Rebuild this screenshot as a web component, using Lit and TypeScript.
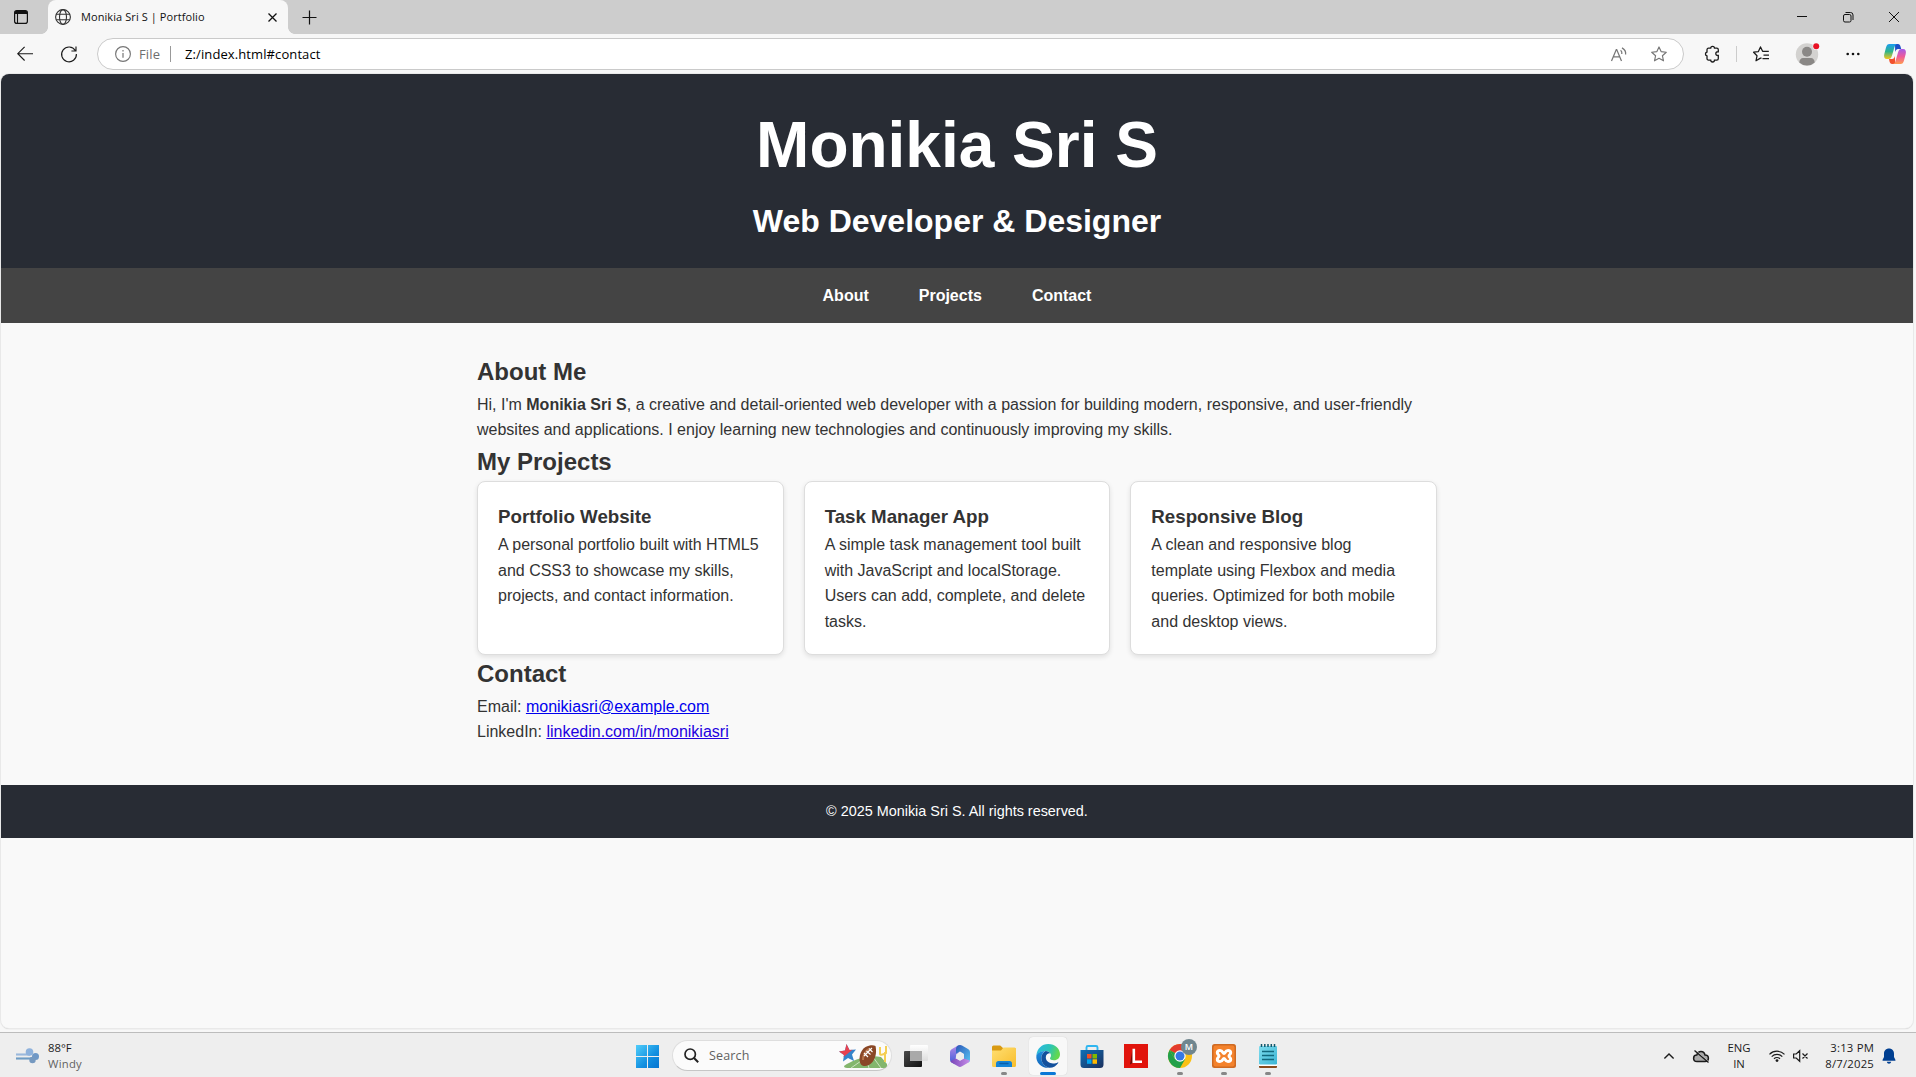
import { LitElement, html, css, svg } from "lit";
import { customElement } from "lit/decorators.js";

const uiFont = css`"Segoe UI", "Open Sans", "Noto Sans", sans-serif`;

@customElement("browser-tabs")
class BrowserTabs extends LitElement {
  static styles = css`
    :host { display: flex; align-items: center; height: 34px; background: #cdcdcd; font: 11px/34px ${uiFont}; color: #111; }
    svg { display: block; fill: none; stroke: #111; overflow: visible; flex: none; }
    .workspaces { width: 42px; height: 34px; display: flex; align-items: center; justify-content: center; margin-right: 6px; }
    .tab { position: relative; width: 240px; height: 34px; box-sizing: border-box; background: #f7f7f7; border-radius: 8px 8px 0 0; display: flex; align-items: center; padding: 0 11px 0 7px; }
    .tab::before, .tab::after { content: ""; position: absolute; bottom: 0; width: 7px; height: 7px; }
    .tab::before { left: -7px; background: radial-gradient(circle at 0 0, #cdcdcd 6.6px, #f7f7f7 7.2px); }
    .tab::after { right: -7px; background: radial-gradient(circle at 100% 0, #cdcdcd 6.6px, #f7f7f7 7.2px); }
    .title { margin-left: 10px; flex: 1; white-space: nowrap; letter-spacing: 0.08px; }
    .add { margin-left: 14px; }
    .controls { margin-left: auto; display: flex; }
    .control { width: 46px; display: flex; align-items: center; justify-content: center; }
    .controls .control:last-child { margin-right: -1px; }
  `;
  render() {
    return html`
      <div class="workspaces">
        <svg width="14" height="14" viewBox="0 0 14 14"><rect x=".6" y=".6" width="12.8" height="12.8" rx="2.2" stroke-width="1.2"/><path d="M1 2.5C1 1 2 .8 3 .8h8c1.500 0 2 .6 2 1.700V4H1z" fill="#111" stroke="none"/><path d="M3.500 3.500V13" stroke-width="1.100"/></svg>
      </div>
      <div class="tab">
        <svg width="16" height="16" viewBox="0 0 16 16"><g stroke="#333" stroke-width="1.100"><circle cx="8" cy="8" r="7.400"/><ellipse cx="8" cy="8" rx="3.500" ry="7.400"/><path d="M1.200 5.300h13.600M1.200 10.700h13.600"/></g></svg>
        <span class="title">Monikia Sri S | Portfolio</span>
        <svg width="9" height="9" viewBox="0 0 9 9"><path d="M.5.5l8 8M8.500.5l-8 8" stroke-width="1.250"/></svg>
      </div>
      <svg class="add" width="15" height="15" viewBox="0 0 15 15"><path d="M.5 7.500h14M7.500.5v14" stroke-width="1.200"/></svg>
      <div class="controls">
        <div class="control"><svg width="10" height="10" viewBox="0 0 10 10"><path d="M0 4.500h10"/></svg></div>
        <div class="control"><svg width="10" height="10" viewBox="0 0 10 10"><rect x=".5" y="2.500" width="7.500" height="7.500" rx="1.500"/><path d="M2.500.5h5A2.500 2.500 0 0 1 10 3v5"/></svg></div>
        <div class="control"><svg width="10" height="10" viewBox="0 0 10 10"><path d="M0 0l10 10M10 0L0 10"/></svg></div>
      </div>`;
  }
}

const star = svg`<path d="M8 .9l2.100 4.700 5.200.6-3.900 3.500 1.100 5.100L8 12.300l-4.500 2.500 1.100-5.100L.7 6.200l5.200-.6z" stroke-linejoin="round"/>`;

@customElement("browser-toolbar")
class BrowserToolbar extends LitElement {
  static styles = css`
    :host { display: flex; align-items: center; height: 40px; box-sizing: border-box; background: #f7f7f7; padding: 0 10px 0 17px; font: 13px/20px ${uiFont}; }
    svg { display: block; fill: none; stroke: #1b1b1b; stroke-width: 1.15; overflow: visible; flex: none; }
    .reload { margin-left: 28px; }
    .address { margin-left: 20px; width: 1587px; height: 32px; box-sizing: border-box; border: 1px solid #cacaca; border-radius: 16px; background: #fff; display: flex; align-items: center; padding: 0 16px 0 17px; }
    .grey { stroke: #767676; }
    .scheme { margin-left: 8px; color: #6e6e6e; width: 31px; font-size: 13px; letter-spacing: 0.15px; }
    .rule { width: 1px; height: 16px; background: #999; }
    .url { margin-left: 14px; flex: 1; color: #000; letter-spacing: 0.1px; }
    .read { margin-right: 24px; }
    .ext { margin-left: 21px; }
    .faint { background: #ccc; margin: 0 16px; }
    .avatar { margin-left: 27px; }
    .more { margin-left: 28px; fill: #111; stroke: none; }
    .copilot { margin-left: 24px; stroke: none; }
  `;
  render() {
    return html`
      <svg width="16" height="16" viewBox="0 0 16 16"><path d="M16 7.700H.8M7.600.9L.8 7.700l6.800 6.800"/></svg>
      <svg class="reload" width="16" height="16" viewBox="0 0 16 16"><path d="M14.300 4.500A7.400 7.400 0 1 0 15.400 8M15 .4v4.600h-4.600"/></svg>
      <div class="address">
        <svg class="grey" width="16" height="16" viewBox="0 0 16 16"><circle cx="8" cy="8" r="7.400"/><path d="M8 7v4.800M8 4v1.400" stroke-width="1.200"/></svg>
        <span class="scheme">File</span><span class="rule"></span>
        <span class="url">Z:/index.html#contact</span>
        <svg class="read grey" width="16" height="15" viewBox="0 0 16 15"><path d="M.5 14L5.300 2.500h.4L10.500 14M2.300 9.800h6.400M9.600 3.200c1.100.9 1.500 2.300 1.200 3.800M11 .9c2.800 1.600 4 3.900 3.600 6.600" stroke-width="1.250"/></svg>
        <svg class="grey" width="16" height="16" viewBox="0 0 16 16">${star}</svg>
      </div>
      <svg class="ext" width="15" height="16" viewBox="0 0 15 16"><path d="M3.500 2.200h2.200a1.900 1.900 0 0 1 3.800 0h2.300c1 0 1.500.6 1.500 1.500v2.100c-3-.7-3.700 3.900 0 3.700v3c0 1-.6 1.600-1.500 1.600H9.500a1.900 1.900 0 0 1-3.800 0H3.500c-.9 0-1.500-.6-1.500-1.600v-2.600a2 2 0 0 1 0-3.900V3.700c0-.9.6-1.500 1.500-1.500z" stroke-width="1.300"/></svg>
      <span class="rule faint"></span>
      <svg width="16" height="16" viewBox="0 0 16 16"><path d="M8.500 11.800L7 12.400l-4 2.400 1-5L.6 6.200l4.800-.6L7.500.9l2.100 4.400h6.200M10.500 9h5.500M9.500 12.500H16" stroke-linejoin="round" stroke-width="1.250"/></svg>
      <svg class="avatar" width="22" height="23" viewBox="0 0 22 23"><g stroke="none"><circle cx="11" cy="11.500" r="11.200" fill="#d3d2d0"/><circle cx="11" cy="8.800" r="5" fill="#8a8886"/><path d="M3.300 19.500C3.500 16.500 5 15 7 15h8c2 0 3.500 1.500 3.700 4.500a11.200 11.200 0 0 1-15.400 0z" fill="#8a8886"/><circle cx="20.200" cy="3.300" r="3.600" fill="#f7f7f7"/><circle cx="20.200" cy="3.300" r="3" fill="#e81123"/></g></svg>
      <svg class="more" width="14" height="4" viewBox="0 0 14 4"><circle cx="1.700" cy="2" r="1.300"/><circle cx="7" cy="2" r="1.300"/><circle cx="12.300" cy="2" r="1.300"/></svg>
      <svg class="copilot" width="22" height="20" viewBox="0 0 22 20">
        <defs>
          <linearGradient id="a" x1="0" y1="0" x2="0" y2="1"><stop offset="0" stop-color="#1b9df0"/><stop offset=".5" stop-color="#2fb48a"/><stop offset="1" stop-color="#f6c61a"/></linearGradient>
          <linearGradient id="b" x1="0" y1="0" x2="0" y2="1"><stop offset="0" stop-color="#a45be8"/><stop offset=".5" stop-color="#ee5a9a"/><stop offset="1" stop-color="#ff9a50"/></linearGradient>
        </defs>
        <path d="M11 0h3c1.500 0 2 1 2.500 2.500l.7 2.500h-3c-2 0-2.500 1.500-3 3z" fill="#1c50c8"/>
        <path d="M11 20H8c-1.500 0-2-1-2.500-2.500L5 15h3c2 0 2.500-1.500 3-3z" fill="#f2502e"/>
        <path d="M5.500 0H13c-1.500.3-2 1.500-2.500 3L8 11.500C7.300 14 6.500 15 4.500 15H3c-2.500 0-3.500-2-2.700-5L2 3.500C2.700 1 3.500 0 5.500 0z" fill="url(#a)"/>
        <path d="M16.500 20H9c1.500-.3 2-1.500 2.500-3L14 8.500c.7-2.500 1.500-3.500 3.500-3.500H19c2.500 0 3.500 2 2.700 5L20 16.500c-.7 2.500-1.500 3.500-3.500 3.500z" fill="url(#b)"/>
      </svg>`;
  }
}

const projects = [
  { name: "Portfolio Website", text: "A personal portfolio built with HTML5 and CSS3 to showcase my skills, projects, and contact information." },
  { name: "Task Manager App", text: "A simple task management tool built with JavaScript and localStorage. Users can add, complete, and delete tasks." },
  { name: "Responsive Blog", text: "A clean and responsive blog template using Flexbox and media queries. Optimized for both mobile and desktop views." },
];

@customElement("portfolio-page")
class PortfolioPage extends LitElement {
  static styles = css`
    :host { display: block; background: #f9f9f9; color: #333; font: 16px/1.6 Arial, "Liberation Sans", sans-serif; }
    * { margin: 0; padding: 0; box-sizing: border-box; }
    header { background: #282c34; color: #fff; padding: 20px; text-align: center; }
    h1 { font-size: 64px; }
    header h2 { font-size: 32px; }
    nav { background: #444; padding: 15px; display: flex; justify-content: center; gap: 50px; }
    nav a { color: #fff; font-weight: bold; text-decoration: none; }
    main { max-width: 1000px; margin: 0 auto; padding: 30px 20px 40px; }
    h3 { font-size: 1.17em; }
    .cards { display: grid; grid-template-columns: repeat(3, 1fr); gap: 20px; }
    .card { background: #fff; border: 1px solid #ddd; border-radius: 8px; padding: 20px; box-shadow: 0 2px 5px rgba(0, 0, 0, 0.1); }
    .link { color: #0000ee; }
    .visited { color: #2200e0; }
    footer { background: #282c34; color: #fff; text-align: center; padding: 15px; font-size: 14.4px; }
  `;
  render() {
    return html`
      <header><h1>Monikia Sri S</h1><h2>Web Developer &amp; Designer</h2></header>
      <nav><a href="#about">About</a><a href="#projects">Projects</a><a href="#contact">Contact</a></nav>
      <main>
        <section><h2>About Me</h2>
          <p>Hi, I'm <strong>Monikia Sri S</strong>, a creative and detail-oriented web developer with a passion for building modern, responsive, and user-friendly websites and applications. I enjoy learning new technologies and continuously improving my skills.</p>
        </section>
        <section><h2>My Projects</h2>
          <div class="cards">${projects.map((p) => html`<div class="card"><h3>${p.name}</h3><p>${p.text}</p></div>`)}</div>
        </section>
        <section><h2>Contact</h2>
          <p>Email: <a class="link" href="mailto:monikiasri@example.com">monikiasri@example.com</a></p>
          <p>LinkedIn: <a class="link visited" href="#linkedin">linkedin.com/in/monikiasri</a></p>
        </section>
      </main>
      <footer><p>© 2025 Monikia Sri S. All rights reserved.</p></footer>`;
  }
}

const taskView = svg`<defs><linearGradient id="tv" x1="0" y1="0" x2="1" y2="1"><stop offset="0" stop-color="#4a4a4a"/><stop offset="1" stop-color="#111"/></linearGradient><linearGradient id="tw" x1="0" y1="0" x2="0" y2="1"><stop offset="0" stop-color="#fff"/><stop offset="1" stop-color="#ddd"/></linearGradient></defs>
  <rect x="0" y="7" width="18" height="16" rx="1" fill="url(#tv)"/><rect x="6" y="1" width="18" height="16" rx="1" fill="url(#tw)"/><path d="M6 7h12v10H7a1 1 0 0 1-1-1z" fill="#a9a9a9"/>`;

const m365 = svg`<defs><linearGradient id="m1" x1="0" y1="0" x2="0" y2="1"><stop offset="0" stop-color="#b88be8"/><stop offset="1" stop-color="#3a5bd8"/></linearGradient><linearGradient id="m2" x1="0" y1="0" x2="1" y2="1"><stop offset="0" stop-color="#2b57b8"/><stop offset="1" stop-color="#58c5f2"/></linearGradient><linearGradient id="m3" x1="0" y1="0" x2="1" y2="0"><stop offset="0" stop-color="#7a45b8"/><stop offset="1" stop-color="#c68ee8"/></linearGradient></defs>
  <path d="M10 1.500L4 5C2.500 6 2 7 2 8.500v7C2 17 2.800 18 4 18.700l3 1.500 1-8L11 8l2.500-6C12.500 1 11.500.8 10 1.500z" fill="url(#m1)"/>
  <path d="M10 1.500c1.500-.8 2.800-.7 4 0l6 3.500c1.500 1 2 2 2 3.500v7c0 1.500-.5 2.200-1.500 3L16 15.500V10L12 7.500 8 9.500V5c0-1.500.6-2.700 2-3.500z" fill="url(#m2)"/>
  <path d="M2.500 17l5.500-2.500 4 2.200 4-2.200 5.800 2c-.3 1-.8 1.800-1.800 2.300l-6 3.500c-1.500.8-2.700.8-4 0l-6-3.500c-.9-.5-1.300-1-1.500-1.800z" fill="url(#m3)"/><path d="M12 8l3.800 2.200v4L12 16.400l-3.800-2.200v-4z" fill="#ededed"/>`;

const explorer = svg`<defs><linearGradient id="e1" x1="0" y1="0" x2="1" y2="1"><stop offset="0" stop-color="#ffdf73"/><stop offset="1" stop-color="#f8bd2b"/></linearGradient></defs>
  <path d="M0 3a1.500 1.500 0 0 1 1.500-1.500h6.700L11 4h11.500A1.500 1.500 0 0 1 24 5.500V8H0z" fill="#d99a12"/><path d="M0 6.500h9L11.500 3.500h11A1.500 1.500 0 0 1 24 5v16.500a1.500 1.500 0 0 1-1.500 1.500h-21A1.500 1.500 0 0 1 0 21.500z" fill="url(#e1)"/>
  <path d="M4 23v-3.500A2.500 2.500 0 0 1 6.500 17h11a2.500 2.500 0 0 1 2.500 2.500V23z" fill="#1684d6"/><path d="M8 19.500h8" stroke="#0b5ea8" stroke-width="1.300" stroke-linecap="round"/>`;

const edge = svg`<defs><linearGradient id="g1" x1="0" y1="0" x2="1" y2=".3"><stop offset="0" stop-color="#2cb6e8"/><stop offset=".6" stop-color="#2cc4b5"/><stop offset="1" stop-color="#62d84e"/></linearGradient><linearGradient id="g2" x1="0" y1="0" x2="0" y2="1"><stop offset="0" stop-color="#1d8ee0"/><stop offset="1" stop-color="#1565b8"/></linearGradient></defs>
  <path d="M.4 11.200C1 4.800 5.900 0 12.200 0 19 0 24 4.800 24 10.300c0 3.700-2.600 6-6 6-2.600 0-4-1-4-2 0-.7 1-1.200 1-3 0-2.300-2.200-4.300-5.400-4.300C5.700 7 2.300 9 .4 11.200z" fill="url(#g1)"/>
  <path d="M.4 11.200C2.300 8.400 5.500 7 9.200 7c-2.300 1.400-3.900 4-3.900 7 0 4.700 3.300 8.700 8 9.800C6 24.500-.6 19 .4 11.200z" fill="url(#g2)"/>
  <path d="M9.600 7C11.800 7 13.500 8 14.400 9.300c-2-.4-4.600 1-4.600 4 0 4 3.700 6.200 7.200 6.200 2.100 0 3.700-.6 4.700-1.100.5-.2.800.1.500.6C20.500 21.700 17 24 13.300 23.800 8.600 22.800 5.300 18.700 5.300 14 5.300 11 7 8.500 9.600 7z" fill="#12509c"/>`;

const store = svg`<defs><linearGradient id="s1" x1="0" y1="0" x2="1" y2="1"><stop offset="0" stop-color="#0f70b8"/><stop offset="1" stop-color="#1b2f5c"/></linearGradient></defs>
  <path d="M6.500 7V3.500A1.500 1.500 0 0 1 8 2h8a1.500 1.500 0 0 1 1.500 1.500V7" fill="none" stroke="#2fb6f0" stroke-width="1.900"/><path d="M.5 6h23v14.500a3.500 3.500 0 0 1-3.500 3.500H4a3.500 3.500 0 0 1-3.500-3.500z" fill="url(#s1)"/>
  <path d="M7 10h4.500v4.500H7z" fill="#f25022"/><path d="M12.500 10H17v4.500h-4.500z" fill="#7fba00"/><path d="M7 15.300h4.500v4.500H7z" fill="#00a4ef"/><path d="M12.500 15.300H17v4.500h-4.500z" fill="#ffb900"/>`;

const lApp = svg`<path d="M0 0h24v24H0z" fill="#e1140c"/><path d="M8.500 5v14L6 20.500z" fill="#6e0a06"/><path d="M8.500 4.700h2.600v11.800H18V19H8.500z" fill="#fff"/>`;

const chrome = svg`<circle cx="12" cy="12" r="12" fill="#fbc116"/><path d="M12 12L1.600 6A12 12 0 0 1 22.400 6z" fill="#e33b2e"/><path d="M1.600 6A12 12 0 0 0 12 24l5.200-9L12 12 6.800 15z" fill="#22a04a"/><path d="M12 12L1.600 6 6.800 15z" fill="#22a04a"/><path d="M12 6.300h10.500L20 3H9z" fill="#e33b2e"/><circle cx="12" cy="12" r="5.700" fill="#fff"/><circle cx="12" cy="12" r="4.500" fill="#3578e5"/>`;

const xampp = svg`<rect width="24" height="24" rx="2.500" fill="#cf6a22"/><rect x="1.500" y="1.500" width="21" height="21" rx="2" fill="#f4822c"/><path d="M8 6.500c3 0 2.700 3 4 3s1-3 4-3c1.700 0 2.700 1 2.700 2.300 0 1.700-1.700 1.700-1.700 3.200s1.700 1.500 1.700 3.200c0 1.300-1 2.300-2.700 2.300-3 0-2.700-3-4-3s-1 3-4 3c-1.700 0-2.700-1-2.700-2.300 0-1.700 1.700-1.700 1.700-3.200s-1.700-1.500-1.700-3.200c0-1.300 1-2.300 2.700-2.300z" fill="none" stroke="#fff" stroke-width="3"/>`;

const notes = svg`<defs><linearGradient id="n1" x1="0" y1="0" x2="1" y2="1"><stop offset="0" stop-color="#7fdcee"/><stop offset="1" stop-color="#3bb5d4"/></linearGradient></defs><rect x="3" y="19" width="18" height="5" rx="1" fill="#8a4a1c"/><rect x="3" y="20" width="18" height="2" fill="#fff"/><rect x="3" y="2" width="18" height="18.500" rx="1" fill="url(#n1)"/><path d="M6 7.500h12M6 11.500h12M6 15.500h12" stroke="#12687e" stroke-width="1.500"/><path d="M5.500 0v3M8.800 0v3M12 0v3M15.300 0v3M18.500 0v3" stroke="#12586c" stroke-width="1.500"/>`;

const apps = [
  { icon: taskView, state: "" }, { icon: m365, state: "" }, { icon: explorer, state: "open" },
  { icon: edge, state: "active" }, { icon: store, state: "" }, { icon: lApp, state: "" },
  { icon: chrome, state: "open", badge: "M" }, { icon: xampp, state: "open" }, { icon: notes, state: "open" },
];

@customElement("task-bar")
class TaskBar extends LitElement {
  static styles = css`
    :host { display: grid; grid-template-columns: 626px 664px 1fr; align-items: center; height: 45px; box-sizing: border-box; border-top: 1px solid #bcbcbc; background: #eee; font: 11.3px/16px ${uiFont}; color: #1b1b1b; }
    svg { display: block; overflow: visible; flex: none; }
    .weather { display: flex; align-items: center; padding: 2px 0 0 16px; gap: 9px; }
    .muted { color: #626262; letter-spacing: 0.25px; }
    .middle { display: flex; align-items: center; height: 44px; }
    .start { width: 23px; height: 23px; margin: 3px 13px 0 10px; }
    .search { width: 220px; height: 31px; margin: 1px 2px 0 0; box-sizing: border-box; border: 1px solid #dedede; border-bottom-color: #c6c6c6; border-radius: 16px; background: #fbfbfb; display: flex; align-items: center; padding: 0 3px 0 11px; }
    .placeholder { margin: 1px 0 0 10px; flex: 1; font-size: 12.5px; letter-spacing: 0.15px; color: #616161; }
    .app { position: relative; width: 44px; height: 38px; margin-top: 2px; display: flex; align-items: center; justify-content: center; }
    .app svg { margin-bottom: 1px; }
    .app.active::before { content: ""; position: absolute; inset: 0 3px; background: #f8f8f8; border-radius: 4px; box-shadow: 0 0 1px rgba(0, 0, 0, 0.2); }
    .app.active svg { position: relative; }
    .app.open::after, .app.active::after { content: ""; position: absolute; bottom: 0; width: 6px; height: 3px; border-radius: 2px; background: #878787; }
    .app.active::after { width: 16px; background: #0a78d6; }
    .badge { position: absolute; left: 23px; top: 2px; width: 16px; height: 16px; border-radius: 50%; background: #70868f; color: #fff; font: 600 9px/16px ${uiFont}; text-align: center; }
    .tray { display: flex; align-items: center; justify-content: flex-end; padding: 2px 20px 0 0; }
    .lines { fill: none; stroke: #1b1b1b; stroke-width: 1.2; }
    .cloud { margin-left: 19px; }
    .lang { width: 40px; margin: 0 10px; text-align: center; }
    .mute { margin-left: 8px; }
    .clock { width: 60px; margin: 0 8px 0 6px; text-align: right; white-space: nowrap; letter-spacing: 0.2px; }
  `;
  render() {
    return html`
      <div class="weather">
        <svg width="23" height="16" viewBox="0 0 23 16"><g fill="none" stroke-width="2.100"><path d="M0 6.500h14" stroke="#9ab8dc"/><path d="M0 10.500h17" stroke="#6e9cc4"/></g><circle cx="13.500" cy="4" r="3.800" fill="#8fb2dc"/><circle cx="19.500" cy="8.500" r="3.500" fill="#6f98c6"/><circle cx="16.500" cy="12" r="3.200" fill="#7599c0"/></svg>
        <div><div>88°F</div><div class="muted">Windy</div></div>
      </div>
      <div class="middle">
        <svg class="start" viewBox="0 0 23 23"><defs><linearGradient id="w" gradientUnits="userSpaceOnUse" x1="0" y1="0" x2="23" y2="23"><stop offset="0" stop-color="#50cdfa"/><stop offset=".6" stop-color="#118fe0"/><stop offset="1" stop-color="#0674d0"/></linearGradient></defs><path d="M0 0h11v11H0zM12 0h11v11H12zM0 12h11v11H0zM12 12h11v11H12z" fill="url(#w)"/></svg>
        <div class="search">
          <svg width="15" height="15" viewBox="0 0 15 15"><circle cx="6.200" cy="6.200" r="5.200" fill="none" stroke="#222" stroke-width="1.700"/><path d="M10 10l4.200 4.200" stroke="#222" stroke-width="2"/></svg>
          <span class="placeholder">Search</span>
          <svg width="49" height="24" viewBox="0 0 49 24">
            <path d="M5 22C12 17 28 10 42 13l6 7v2c-1 1-1 2-3 2H8c-2 0-3-1-3-2z" fill="#83b66d"/><path d="M12 24l10-7M30 24l-3-9M42 24l-8-11" stroke="#d4e8c8" stroke-width=".9"/>
            <path d="M41 3v7q0 2 6-1V2M46 8v10" stroke="#f4cf55" stroke-width="2" fill="none"/>
            <path d="M7.500 0l3 6 6.500-.5-4 5 2 6.500-6-3-5 3.500 1-6.500L0 7.500l6-1z" fill="#3484cb"/><path d="M7.500 0l3 6 3-.2L4.500 13 5 11 0 7.500l6-1z" fill="#e8414f"/>
            <path d="M22 20.500c-3-4-1.500-14 4.500-17.500 4-2 8-2 10-1 1 4 1 11-3 16-3.500 4-8.500 5.500-11.500 2.500z" fill="#8a4726"/><path d="M24 16c0-4 2-9 6-11" stroke="#b77349" stroke-width="2" fill="none"/><path d="M25 12l8-8M25 9l4 4M27.500 7l4 3.500M30 4.500l3.500 3.500" stroke="#fff" stroke-width="1.100"/>
          </svg>
        </div>
        ${apps.map((a) => html`<div class="app ${a.state}"><svg width="24" height="24" viewBox="0 0 24 24">${a.icon}</svg>${a.badge ? html`<span class="badge">${a.badge}</span>` : ""}</div>`)}
      </div>
      <div class="tray">
        <svg class="lines" width="10" height="6" viewBox="0 0 10 6"><path d="M.4 5.500L5 1l4.600 4.500" stroke-width="1.400"/></svg>
        <svg class="lines cloud" width="16" height="13" viewBox="0 0 16 13"><path d="M4 11.500C2 11.500.6 10 .6 8.200S2 5 3.800 5C4.500 2.700 6 1.500 8 1.500S11.500 2.700 12 5c2 0 3.400 1.300 3.400 3.200S14 11.500 12 11.500z" fill="#aaa" stroke-width="1.500"/><path d="M3.200 1l11.800 10.300" stroke="#eee" stroke-width="1"/><path d="M1.500.5l14 12" stroke-width="1.400"/></svg>
        <div class="lang"><div>ENG</div><div>IN</div></div>
        <svg class="lines" width="16" height="12" viewBox="0 0 16 12"><path d="M.5 4.300a10.600 10.600 0 0 1 15 0M2.700 6.600a7.500 7.500 0 0 1 10.600 0M5 8.800a4.300 4.300 0 0 1 6 0"/><circle cx="8" cy="10.600" r="1.400" fill="#1b1b1b" stroke="none"/></svg>
        <svg class="lines mute" width="15" height="12" viewBox="0 0 15 12"><path d="M.6 4v4h2.600l3.500 3.300V.7L3.200 4zM9.500 3.500l5 5M14.500 3.500l-5 5"/></svg>
        <div class="clock"><div>3:13 PM</div><div>8/7/2025</div></div>
        <svg width="14" height="16" viewBox="0 0 14 16"><path d="M7 .5c3 0 5 2.200 5 5.200V9l1.500 3c.2.500 0 .8-.5.800H1c-.5 0-.7-.3-.5-.8L2 9V5.700C2 2.700 4 .5 7 .5zM4.800 13.800h4.400C9 15 8 15.700 7 15.700s-2-.7-2.200-1.900z" fill="#003f91"/></svg>
      </div>`;
  }
}

@customElement("app-root")
class AppRoot extends LitElement {
  static styles = css`
    :host { display: flex; flex-direction: column; width: 1916px; height: 1077px; overflow: hidden; background: #f7f7f7; }
    .view { width: 1912px; height: 954px; margin: 0 0 4px 1px; border-radius: 8px; background: #f9f9f9; overflow: hidden; box-shadow: 0 0 0 1px #e9e9e9, 0 1px 1px #c4c4c4; }
  `;
  render() {
    return html`<browser-tabs></browser-tabs><browser-toolbar></browser-toolbar><div class="view"><portfolio-page></portfolio-page></div><task-bar></task-bar>`;
  }
}
